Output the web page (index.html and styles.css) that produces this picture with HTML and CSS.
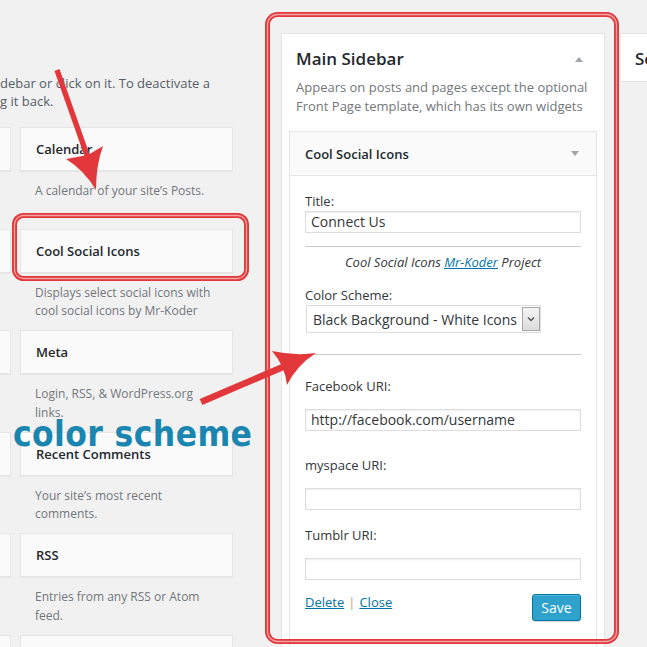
FILE: index.html
```html
<!DOCTYPE html>
<html>
<head>
<meta charset="utf-8">
<link rel="stylesheet" href="styles.css">
</head>
<body>
<div class="page">
  <section class="available">
    <p class="intro">debar or click on it. To deactivate a<br>g it back.</p>
    <div class="widget-grid">
      <div class="widget-item"><div class="card"></div></div>
      <div class="widget-item"><div class="card"><h4>Calendar</h4></div><p class="desc">A calendar of your site’s Posts.</p></div>
      <div class="widget-item"><div class="card"></div></div>
      <div class="widget-item"><div class="card"><h4>Cool Social Icons</h4></div><p class="desc">Displays select social icons with cool social icons by Mr-Koder</p></div>
      <div class="widget-item"><div class="card"></div></div>
      <div class="widget-item"><div class="card"><h4>Meta</h4></div><p class="desc">Login, RSS, &amp; WordPress.org links.</p></div>
      <div class="widget-item"><div class="card"></div></div>
      <div class="widget-item"><div class="card"><h4>Recent Comments</h4></div><p class="desc">Your site’s most recent comments.</p></div>
      <div class="widget-item"><div class="card"></div></div>
      <div class="widget-item"><div class="card"><h4>RSS</h4></div><p class="desc">Entries from any RSS or Atom feed.</p></div>
      <div class="widget-item"><div class="card"></div></div>
      <div class="widget-item"><div class="card"></div></div>
    </div>
  </section>

  <section class="sidebar">
    <div class="sidebar-head">
      <h2>Main Sidebar</h2>
      <span class="tri tri-up"></span>
    </div>
    <p class="sidebar-desc">Appears on posts and pages except the optional Front Page template, which has its own widgets</p>
    <div class="widget">
      <div class="widget-top">
        <h4>Cool Social Icons</h4>
        <span class="tri tri-down"></span>
      </div>
      <div class="widget-inside">
        <label class="lbl lbl-title">Title:</label>
        <div class="input input-tight">Connect Us</div>
        <hr class="sep sep-1">
        <p class="credit">Cool Social Icons <a href="#">Mr-Koder</a> Project</p>
        <label class="lbl lbl-scheme">Color Scheme:</label>
        <div class="select">
          <span class="select-value">Black Background - White Icons</span>
          <span class="select-btn"><svg width="8" height="6" viewBox="0 0 8 6"><path d="M1 1.5 L4 4.5 L7 1.5" fill="none" stroke="#555" stroke-width="1.4"/></svg></span>
        </div>
        <hr class="sep sep-2">
        <label class="lbl lbl-fb">Facebook URI:</label>
        <div class="input input-gap">http://facebook.com/username</div>
        <label class="lbl lbl-my">myspace URI:</label>
        <div class="input input-gap"></div>
        <label class="lbl lbl-tu">Tumblr URI:</label>
        <div class="input input-gap"></div>
        <div class="actions">
          <div class="links"><a href="#">Delete</a><span class="pipe">|</span><a href="#">Close</a></div>
          <span class="btn-save">Save</span>
        </div>
      </div>
    </div>
  </section>

  <section class="sidebar sidebar-next">
    <div class="sidebar-head"><h2>Secondary Sidebar</h2></div>
  </section>
</div>

<div class="annot">
  <svg class="annot-svg" width="647" height="647" viewBox="0 0 647 647">
    <rect x="267.5" y="14.5" width="349" height="627" rx="10" fill="none" stroke="#e2383b" stroke-width="5"/>
    <rect x="267.5" y="14.5" width="349" height="627" rx="10" fill="none" stroke="#f3a3a4" stroke-width="1.3"/>
    <rect x="14.5" y="215.5" width="232" height="63" rx="9" fill="none" stroke="#e2383b" stroke-width="5"/>
    <rect x="14.5" y="215.5" width="232" height="63" rx="9" fill="none" stroke="#f3a3a4" stroke-width="1.3"/>
    <polygon points="54.5,70.9 59.5,69.1 90.5,157.1 85.5,158.9" fill="#e2383b"/>
    <path d="M66 159 L88 155 L103 146 Q96 165 96 190 Q84 170 66 159 Z" fill="#e2383b"/>
    <polygon points="199.7,399 202.3,405 284.3,370 281.7,364" fill="#e2383b"/>
    <path d="M272 351 Q295 356 316 353 Q297 365 287 385 Q285 366 272 351 Z" fill="#e2383b"/>
  </svg>
  <div class="callout">color scheme</div>
</div>
</body>
</html>
```

FILE: styles.css
```css
html, body {
  margin: 0;
  padding: 0;
  overflow: hidden;
  width: 647px;
  height: 647px;
}
body {
  background: #f1f1f1;
  font-family: "Open Sans", "Liberation Sans", sans-serif;
  font-size: 13px;
  color: #444;
  position: relative;
}
.page {
  display: flex;
  align-items: flex-start;
}
.available {
  width: 233px;
  flex: none;
}
.intro {
  margin: 74px 0 0;
  line-height: 18px;
  font-size: 13px;
  color: #555d66;
  white-space: nowrap;
}
.widget-grid {
  margin: 17px 0 0 -202px;
  display: grid;
  grid-template-columns: 213px 213px;
  column-gap: 9px;
  grid-auto-rows: 101.6px;
}
.card {
  box-sizing: border-box;
  height: 44px;
  background: #fafafa;
  border: 1px solid #e5e5e5;
  box-shadow: 0 1px 1px rgba(0,0,0,0.04);
  display: flex;
  align-items: center;
  padding: 0 15px;
}
.card h4 {
  margin: 0;
  font-size: 13px;
  font-weight: 600;
  color: #23282d;
}
.desc {
  margin: 11px 0 0;
  padding: 0 10px 0 15px;
  font-size: 12px;
  line-height: 18.5px;
  color: #72777c;
}
.sidebar {
  flex: none;
  box-sizing: border-box;
  width: 324px;
  margin: 33px 0 0 48px;
  background: #fff;
  border: 1px solid #e5e5e5;
  padding: 0 7px;
  min-height: 640px;
}
.sidebar-head {
  display: flex;
  align-items: center;
  justify-content: space-between;
  padding: 15px 14px 0 7px;
}
.sidebar-head h2 {
  margin: 0;
  font-size: 17px;
  line-height: 20px;
  font-weight: 600;
  color: #23282d;
  white-space: nowrap;
}
.tri {
  width: 0;
  height: 0;
  border-left: 4px solid transparent;
  border-right: 4px solid transparent;
}
.tri-up {
  border-bottom: 5px solid #a0a5aa;
}
.tri-down {
  border-top: 5px solid #a0a5aa;
}
.sidebar-desc {
  margin: 9px 0 0;
  padding: 0 7px;
  line-height: 19px;
  font-size: 13px;
  color: #72777c;
}
.widget {
  margin-top: 15px;
  border: 1px solid #e5e5e5;
  background: #fff;
}
.widget-top {
  height: 43px;
  background: #fafafa;
  border-bottom: 1px solid #e5e5e5;
  display: flex;
  align-items: center;
  justify-content: space-between;
  padding: 0 17px 0 15px;
}
.widget-top h4 {
  margin: 0;
  font-size: 13px;
  font-weight: 600;
  color: #23282d;
}
.widget-inside {
  padding: 16px 15px 30px;
  display: flex;
  flex-direction: column;
}
.lbl {
  display: block;
  font-size: 13px;
  line-height: 18px;
  color: #32373c;
}
.lbl-scheme { margin-top: 15px; }
.lbl-fb { margin-top: 0; }
.lbl-my { margin-top: 25px; }
.lbl-tu { margin-top: 16px; }
.input {
  box-sizing: border-box;
  height: 22px;
  border: 1px solid #ddd;
  box-shadow: inset 0 1px 2px rgba(0,0,0,0.07);
  background: #fff;
  font-size: 14px;
  line-height: 20px;
  padding: 0 5px;
  color: #32373c;
}
.input-tight { margin-top: 1px; }
.input-gap { margin-top: 14px; }
.sep {
  border: 0;
  border-top: 1px solid #ccc;
  width: 100%;
}
.sep-1 { margin: 13px 0 6px; }
.sep-2 { margin: 21px 0 22px; }
.credit {
  margin: 0;
  text-align: center;
  font-style: italic;
  font-size: 13px;
  line-height: 18px;
  color: #32373c;
}
.credit a, .links a {
  color: #0073aa;
  text-decoration: underline;
}
.select {
  align-self: flex-start;
  margin: 1px 0 0 1px;
  box-sizing: border-box;
  height: 28px;
  border: 1px solid #ddd;
  display: flex;
  align-items: stretch;
  background: #fff;
}
.select-value {
  display: flex;
  align-items: center;
  padding: 0 5px 0 6px;
  font-size: 14px;
  color: #32373c;
  white-space: nowrap;
}
.select-btn {
  width: 16px;
  margin: 1px 0;
  border: 1px solid #a7a7a7;
  background: linear-gradient(#f4f4f4, #dcdcdc);
  display: flex;
  align-items: center;
  justify-content: center;
}
.actions {
  margin-top: 13px;
  display: flex;
  justify-content: space-between;
  align-items: flex-start;
}
.links {
  font-size: 13px;
  line-height: 18px;
}
.pipe {
  color: #c9a36a;
  margin: 0 4px;
}
.btn-save {
  margin-top: 1px;
  box-sizing: border-box;
  width: 49px;
  height: 27px;
  background: #2ea2cc;
  border: 1px solid #0074a2;
  border-radius: 3px;
  box-shadow: inset 0 1px 0 rgba(120,200,230,0.5), 0 1px 0 rgba(0,0,0,0.15);
  color: #fff;
  font-size: 14px;
  display: flex;
  align-items: center;
  justify-content: center;
}
.sidebar-next {
  margin-left: 15px;
  min-height: 0;
  height: 49px;
  width: 324px;
}
.sidebar-next .sidebar-head {
  padding-left: 7px;
}
.annot {
  position: absolute;
  left: 0;
  top: 0;
  width: 647px;
  height: 647px;
  pointer-events: none;
}
.annot-svg {
  position: absolute;
  left: 0;
  top: 0;
}
.callout {
  position: absolute;
  left: 13px;
  top: 417px;
  font-family: "DejaVu Sans Condensed", "DejaVu Sans", sans-serif;
  font-weight: bold;
  font-size: 35px;
  line-height: 35px;
  letter-spacing: 0.4px;
  color: #1a86b0;
  white-space: nowrap;
}
```
